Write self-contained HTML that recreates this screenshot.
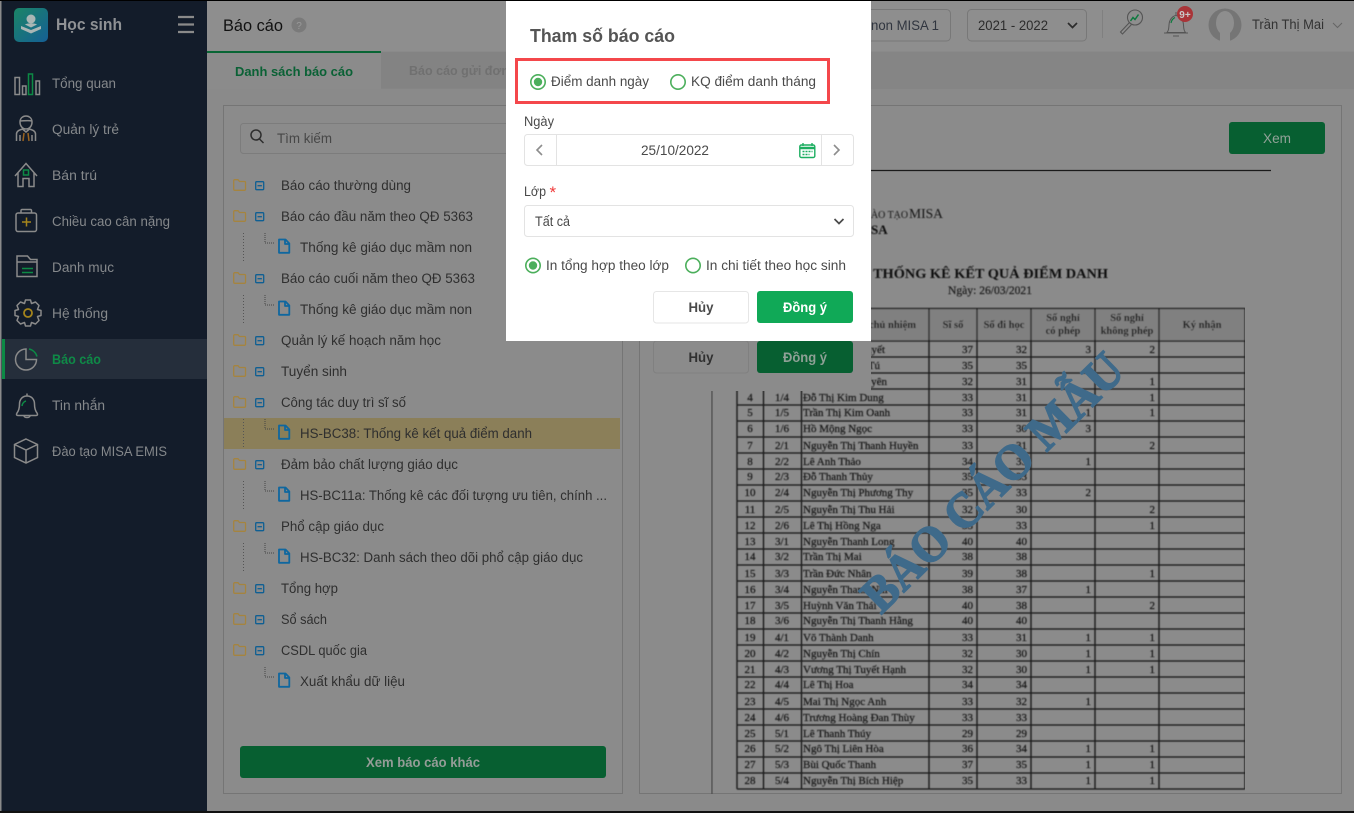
<!DOCTYPE html>
<html lang="vi"><head><meta charset="utf-8"><title>Báo cáo</title>
<style>
html,body{margin:0;padding:0;background:#8b8b8b;width:1354px;height:813px;overflow:hidden}
svg{display:block;position:absolute;left:0;top:0}
text{font-family:"Liberation Sans","Noto Sans CJK SC",sans-serif;font-size:13.5px}
.m text{fill:#85888b;font-size:13.5px}
.t text{fill:#2f2f2f;font-size:13.5px}
.d text{fill:#4a4a4a;font-size:13.5px}
.r text{font-family:"Liberation Serif","Noto Serif CJK SC",serif;font-size:11px;fill:#1a1a1a;stroke:#1a1a1a;stroke-width:.25}
.r .h{font-weight:bold;font-size:10.5px;stroke:none}
.r .n{text-anchor:middle}.r .e{text-anchor:end}
.ic{fill:none;stroke:#8a8a8a;stroke-width:1.5}
.fo{fill:none;stroke:#a5843f;stroke-width:1.3;stroke-linejoin:round}
.mi{fill:none;stroke:#0f5f93;stroke-width:1.3}
.dt{fill:none;stroke:#444;stroke-width:1;stroke-dasharray:1 1}
.dv{fill:none;stroke:#555;stroke-width:1;stroke-dasharray:1 2}
.doc{fill:none;stroke:#0f679f;stroke-width:1.8;stroke-linejoin:round}
</style></head><body>
<svg width="1354" height="813" viewBox="0 0 1354 813" xmlns="http://www.w3.org/2000/svg">
<defs>
<linearGradient id="lg" x1="0" y1="0" x2="1" y2="1"><stop offset="0" stop-color="#1b8566"/><stop offset="1" stop-color="#155f95"/></linearGradient>
<filter id="bl" x="0" y="0" width="100%" height="100%"><feGaussianBlur stdDeviation="0.4"/></filter>
<g id="f"><path class="fo" d="M1.7 1.2h3.3l1.5 1.800h5c.6 0 1 .4 1 1v6.800c0 .6-.4 1-1 1H1.700c-.6 0-1-.4-1-1V2.200c0-.6.4-1 1-1z"/></g>
<g id="x"><rect class="mi" x="0.7" y="0.7" width="8" height="8" rx="1"/><path class="mi" d="M2.5 4.7h4.4"/></g>
<g id="c"><path class="dt" d="M265 -14v10h9"/><path class="doc" d="M279 -7.500h6.500l3.800 4v9.300H279zM285 -7.500v4.500h4.300"/></g>
</defs>

<!-- page base -->
<rect width="1354" height="813" fill="#8a8a8a"/>
<rect x="207" y="1" width="1147" height="50" fill="#8e8e8e"/>
<rect x="207" y="52" width="1147" height="37" fill="#858585"/>
<rect x="207" y="52" width="174" height="37" fill="#8b8b8b"/>
<rect x="207" y="51" width="174" height="2" fill="#086534"/>
<rect x="381" y="52" width="125" height="36" fill="#838383"/>
<text x="235" y="76" textLength="118" lengthAdjust="spacingAndGlyphs" style="font-weight:bold;fill:#0a6135;font-size:13px">Danh sách báo cáo</text>
<text x="409" y="75" textLength="100" lengthAdjust="spacingAndGlyphs" style="font-weight:bold;fill:#707070;font-size:13px">Báo cáo gửi đơn</text>
<text x="223" y="31" textLength="60" lengthAdjust="spacingAndGlyphs" style="font-size:17px;fill:#111">Báo cáo</text>
<circle cx="299" cy="25" r="7.500" fill="#7a7a7a"/><text x="299" y="29" text-anchor="middle" style="font-size:10px;fill:#9a9a9a">?</text>

<!-- header right -->
<rect x="800" y="9.500" width="150.500" height="31.500" rx="4" fill="none" stroke="#787878"/>
<text x="871" y="30" textLength="68" lengthAdjust="spacingAndGlyphs" style="fill:#30353f">non MISA 1</text>
<rect x="967.500" y="9.500" width="119" height="31.500" rx="4" fill="none" stroke="#787878"/>
<text x="978" y="30" textLength="70" lengthAdjust="spacingAndGlyphs" style="fill:#2c2c2c">2021 - 2022</text>
<path d="M1068 23l4.500 4.500 4.500-4.500" fill="none" stroke="#2c2c2c" stroke-width="1.700"/>
<path d="M1102.500 10v28" stroke="#808080"/>
<circle cx="1135" cy="17.500" r="7.500" fill="none" stroke="#555" stroke-width="1.100"/>
<path d="M1129.500 22.500l-9 9.500 2 2 9-9.500" fill="none" stroke="#555" stroke-width="1.100"/>
<path d="M1130.500 21l2.500-3.500 2 2 3.500-5" fill="none" stroke="#0d7a3e" stroke-width="1.500"/>
<path d="M1167 32.500c3-3 1-8 3-12 1.500-3.500 4.500-5 6-5s5 2 6.500 5c2 4 0 9 3 12zM1164 33h24M1173 36h6M1176 12v3" fill="none" stroke="#555" stroke-width="1"/>
<path d="M1171 23c.500-2.500 2-4.500 4-5.500" fill="none" stroke="#0d7a3e" stroke-width="1.200"/>
<circle cx="1185" cy="14" r="8" fill="#a93438"/><text x="1185" y="18" text-anchor="middle" style="font-size:10px;font-weight:bold;fill:#c9c9c9">9+</text>
<circle cx="1225" cy="25" r="16.500" fill="#757575"/><ellipse cx="1225" cy="23" rx="9" ry="12" fill="#8e8e8e"/><rect x="1220" y="30" width="10" height="12" fill="#8e8e8e"/>
<text x="1252" y="29" textLength="72" lengthAdjust="spacingAndGlyphs" style="fill:#333">Trần Thị Mai</text>
<path d="M1333 23l4.500 4.500 4.500-4.500" fill="none" stroke="#666" stroke-width="1"/>

<!-- left panel -->
<rect x="223.500" y="105.500" width="399" height="688" fill="#8b8b8b" stroke="#757575"/>
<rect x="240.500" y="123.500" width="300" height="30" rx="3" fill="#8b8b8b" stroke="#7c7c7c"/>
<circle cx="256" cy="135" r="5" fill="none" stroke="#2e2e2e" stroke-width="1.500"/><path d="M259.500 139l4 4" stroke="#2e2e2e" stroke-width="1.500"/>
<text x="277" y="143" textLength="55" lengthAdjust="spacingAndGlyphs" style="fill:#474747">Tìm kiếm</text>
<rect x="224" y="418" width="396" height="31" fill="#8b7f59"/>

<use href="#f" x="233" y="178.500"/><use href="#x" x="255" y="181"/>
<use href="#f" x="233" y="209.500"/><use href="#x" x="255" y="212"/>
<use href="#f" x="233" y="271.500"/><use href="#x" x="255" y="274"/>
<use href="#f" x="233" y="333.500"/><use href="#x" x="255" y="336"/>
<use href="#f" x="233" y="364.500"/><use href="#x" x="255" y="367"/>
<use href="#f" x="233" y="395.500"/><use href="#x" x="255" y="398"/>
<use href="#f" x="233" y="457.500"/><use href="#x" x="255" y="460"/>
<use href="#f" x="233" y="519.500"/><use href="#x" x="255" y="522"/>
<use href="#f" x="233" y="581.500"/><use href="#x" x="255" y="584"/>
<use href="#f" x="233" y="612.500"/><use href="#x" x="255" y="615"/>
<use href="#f" x="233" y="643.500"/><use href="#x" x="255" y="646"/>
<path class="dv" d="M243.500 233v28M243.500 295v28M243.500 419v28M243.500 481v28M243.500 543v28"/>
<use href="#c" y="247"/><use href="#c" y="309"/><use href="#c" y="433"/><use href="#c" y="495"/><use href="#c" y="557"/><use href="#c" y="681"/>

<g class="t">
<text x="281" y="190" textLength="130" lengthAdjust="spacingAndGlyphs">Báo cáo thường dùng</text>
<text x="281" y="221" textLength="192" lengthAdjust="spacingAndGlyphs">Báo cáo đầu năm theo QĐ 5363</text>
<text x="300" y="252" textLength="172" lengthAdjust="spacingAndGlyphs">Thống kê giáo dục mầm non</text>
<text x="281" y="283" textLength="194" lengthAdjust="spacingAndGlyphs">Báo cáo cuối năm theo QĐ 5363</text>
<text x="300" y="314" textLength="172" lengthAdjust="spacingAndGlyphs">Thống kê giáo dục mầm non</text>
<text x="281" y="345" textLength="160" lengthAdjust="spacingAndGlyphs">Quản lý kế hoạch năm học</text>
<text x="281" y="376" textLength="66" lengthAdjust="spacingAndGlyphs">Tuyển sinh</text>
<text x="281" y="407" textLength="125" lengthAdjust="spacingAndGlyphs">Công tác duy trì sĩ số</text>
<text x="300" y="438" textLength="232" lengthAdjust="spacingAndGlyphs">HS-BC38: Thống kê kết quả điểm danh</text>
<text x="281" y="469" textLength="177" lengthAdjust="spacingAndGlyphs">Đảm bảo chất lượng giáo dục</text>
<text x="300" y="500" textLength="307" lengthAdjust="spacingAndGlyphs">HS-BC11a: Thống kê các đối tượng ưu tiên, chính ...</text>
<text x="281" y="531" textLength="103" lengthAdjust="spacingAndGlyphs">Phổ cập giáo dục</text>
<text x="300" y="562" textLength="283" lengthAdjust="spacingAndGlyphs">HS-BC32: Danh sách theo dõi phổ cập giáo dục</text>
<text x="281" y="593" textLength="57" lengthAdjust="spacingAndGlyphs">Tổng hợp</text>
<text x="281" y="624" textLength="46" lengthAdjust="spacingAndGlyphs">Sổ sách</text>
<text x="281" y="655" textLength="86" lengthAdjust="spacingAndGlyphs">CSDL quốc gia</text>
<text x="300" y="686" textLength="105" lengthAdjust="spacingAndGlyphs">Xuất khẩu dữ liệu</text>
</g>
<rect x="240" y="746" width="366" height="32" rx="3" fill="#075f31"/>
<text x="423" y="767" text-anchor="middle" textLength="114" lengthAdjust="spacingAndGlyphs" style="font-weight:bold;fill:#949c97;font-size:13.500px">Xem báo cáo khác</text>

<!-- right panel -->
<rect x="639.500" y="105.500" width="702" height="688" fill="#8b8b8b" stroke="#757575"/>
<rect x="1229" y="122" width="96" height="32" rx="3" fill="#075f31"/>
<text x="1277" y="143" text-anchor="middle" textLength="28" lengthAdjust="spacingAndGlyphs" style="fill:#92a298">Xem</text>
<path d="M860 170.500h411" stroke="#1b1b1b" stroke-width="1.200"/>

<g filter="url(#bl)">
<text x="871" y="218" textLength="37" lengthAdjust="spacingAndGlyphs" style='font-family:"Liberation Serif",serif;font-size:10.500px;fill:#161616'>ÀO TẠO</text>
<text x="909" y="218" textLength="34" lengthAdjust="spacingAndGlyphs" style='font-family:"Liberation Serif",serif;font-size:13.500px;fill:#161616'>MISA</text>
<text x="871" y="234" style='font-family:"Liberation Serif",serif;font-size:13px;font-weight:bold;fill:#111'>SA</text>
<text x="873" y="278" textLength="235" lengthAdjust="spacingAndGlyphs" style='font-family:"Liberation Serif",serif;font-size:14px;font-weight:bold;fill:#111'>THỐNG KÊ KẾT QUẢ ĐIỂM DANH</text>
<text x="948" y="294" textLength="84" lengthAdjust="spacingAndGlyphs" style='font-family:"Liberation Serif",serif;font-size:11.500px;fill:#1c1c1c;stroke:#1c1c1c;stroke-width:.2'>Ngày: 26/03/2021</text>
<rect x="737" y="309" width="508" height="32" fill="#808080"/>
<path d="M711.500 300V794" stroke="#141414" stroke-width="1.300"/>
<path d="M737 308.500H1245M737 341H1245M737 357H1245M737 373H1245M737 389H1245M737 405H1245M737 421H1245M737 437H1245M737 453H1245M737 469H1245M737 485H1245M737 501H1245M737 517H1245M737 533H1245M737 549H1245M737 565H1245M737 581H1245M737 597H1245M737 613H1245M737 629H1245M737 645H1245M737 661H1245M737 677H1245M737 693H1245M737 709H1245M737 725H1245M737 741H1245M737 757H1245M737 773H1245M737 789H1245" stroke="#181818" stroke-width="1.300"/>
<path d="M737 308V789M763.500 308V789M801.500 308V789M929 308V789M977 308V789M1031 308V789M1095 308V789M1159 308V789M1245 308V789" stroke="#181818" stroke-width="1.300"/>
<g class="r">
<text x="916" y="328" class="h e">Giáo viên chủ nhiệm</text><text x="953" y="328" class="h n">Sĩ số</text><text x="1004" y="328" class="h n">Số đi học</text>
<text x="1063" y="321" class="h n">Số nghỉ</text><text x="1063" y="334" class="h n">có phép</text><text x="1127" y="321" class="h n">Số nghỉ</text><text x="1127" y="334" class="h n">không phép</text><text x="1202" y="328" class="h n">Ký nhận</text>
<text x="885" y="353" class="e">Nguyễn Thị Tuyết</text><text x="973" y="353" class="e">37</text><text x="1027" y="353" class="e">32</text><text x="1091" y="353" class="e">3</text><text x="1155" y="353" class="e">2</text>
<text x="880" y="369" class="e">Nguyễn Thị Tú</text><text x="973" y="369" class="e">35</text><text x="1027" y="369" class="e">35</text>
<text x="887" y="385" class="e">Nguyễn Thị Uyên</text><text x="973" y="385" class="e">32</text><text x="1027" y="385" class="e">31</text><text x="1155" y="385" class="e">1</text>
<text x="750" y="401" class="n">4</text><text x="782" y="401" class="n">1/4</text><text x="803" y="401">Đỗ Thị Kim Dung</text><text x="973" y="401" class="e">33</text><text x="1027" y="401" class="e">31</text><text x="1155" y="401" class="e">1</text>
<text x="750" y="416" class="n">5</text><text x="782" y="416" class="n">1/5</text><text x="803" y="416">Trần Thị Kim Oanh</text><text x="973" y="416" class="e">33</text><text x="1027" y="416" class="e">31</text><text x="1091" y="416" class="e">1</text><text x="1155" y="416" class="e">1</text>
<text x="750" y="432" class="n">6</text><text x="782" y="432" class="n">1/6</text><text x="803" y="432">Hồ Mộng Ngọc</text><text x="973" y="432" class="e">33</text><text x="1027" y="432" class="e">30</text><text x="1091" y="432" class="e">3</text>
<text x="750" y="449" class="n">7</text><text x="782" y="449" class="n">2/1</text><text x="803" y="449">Nguyễn Thị Thanh Huyền</text><text x="973" y="449" class="e">33</text><text x="1027" y="449" class="e">31</text><text x="1155" y="449" class="e">2</text>
<text x="750" y="465" class="n">8</text><text x="782" y="465" class="n">2/2</text><text x="803" y="465">Lê Anh Thảo</text><text x="973" y="465" class="e">34</text><text x="1027" y="465" class="e">33</text><text x="1091" y="465" class="e">1</text>
<text x="750" y="480" class="n">9</text><text x="782" y="480" class="n">2/3</text><text x="803" y="480">Đỗ Thanh Thủy</text><text x="973" y="480" class="e">35</text><text x="1027" y="480" class="e">33</text>
<text x="750" y="496" class="n">10</text><text x="782" y="496" class="n">2/4</text><text x="803" y="496">Nguyễn Thị Phương Thy</text><text x="973" y="496" class="e">35</text><text x="1027" y="496" class="e">33</text><text x="1091" y="496" class="e">2</text>
<text x="750" y="513" class="n">11</text><text x="782" y="513" class="n">2/5</text><text x="803" y="513">Nguyễn Thị Thu Hải</text><text x="973" y="513" class="e">32</text><text x="1027" y="513" class="e">30</text><text x="1155" y="513" class="e">2</text>
<text x="750" y="529" class="n">12</text><text x="782" y="529" class="n">2/6</text><text x="803" y="529">Lê Thị Hồng Nga</text><text x="973" y="529" class="e">33</text><text x="1027" y="529" class="e">33</text><text x="1155" y="529" class="e">1</text>
<text x="750" y="545" class="n">13</text><text x="782" y="545" class="n">3/1</text><text x="803" y="545">Nguyễn Thanh Long</text><text x="973" y="545" class="e">40</text><text x="1027" y="545" class="e">40</text>
<text x="750" y="560" class="n">14</text><text x="782" y="560" class="n">3/2</text><text x="803" y="560">Trần Thị Mai</text><text x="973" y="560" class="e">38</text><text x="1027" y="560" class="e">38</text>
<text x="750" y="577" class="n">15</text><text x="782" y="577" class="n">3/3</text><text x="803" y="577">Trần Đức Nhân</text><text x="973" y="577" class="e">39</text><text x="1027" y="577" class="e">38</text><text x="1155" y="577" class="e">1</text>
<text x="750" y="593" class="n">16</text><text x="782" y="593" class="n">3/4</text><text x="803" y="593">Nguyễn Thanh Nhi</text><text x="973" y="593" class="e">38</text><text x="1027" y="593" class="e">37</text><text x="1091" y="593" class="e">1</text>
<text x="750" y="609" class="n">17</text><text x="782" y="609" class="n">3/5</text><text x="803" y="609">Huỳnh Văn Thái</text><text x="973" y="609" class="e">40</text><text x="1027" y="609" class="e">38</text><text x="1155" y="609" class="e">2</text>
<text x="750" y="624" class="n">18</text><text x="782" y="624" class="n">3/6</text><text x="803" y="624">Nguyễn Thị Thanh Hằng</text><text x="973" y="624" class="e">40</text><text x="1027" y="624" class="e">40</text>
<text x="750" y="641" class="n">19</text><text x="782" y="641" class="n">4/1</text><text x="803" y="641">Võ Thành Danh</text><text x="973" y="641" class="e">33</text><text x="1027" y="641" class="e">31</text><text x="1091" y="641" class="e">1</text><text x="1155" y="641" class="e">1</text>
<text x="750" y="657" class="n">20</text><text x="782" y="657" class="n">4/2</text><text x="803" y="657">Nguyễn Thị Chín</text><text x="973" y="657" class="e">32</text><text x="1027" y="657" class="e">30</text><text x="1091" y="657" class="e">1</text><text x="1155" y="657" class="e">1</text>
<text x="750" y="673" class="n">21</text><text x="782" y="673" class="n">4/3</text><text x="803" y="673">Vương Thị Tuyết Hạnh</text><text x="973" y="673" class="e">32</text><text x="1027" y="673" class="e">30</text><text x="1091" y="673" class="e">1</text><text x="1155" y="673" class="e">1</text>
<text x="750" y="688" class="n">22</text><text x="782" y="688" class="n">4/4</text><text x="803" y="688">Lê Thị Hoa</text><text x="973" y="688" class="e">34</text><text x="1027" y="688" class="e">34</text>
<text x="750" y="705" class="n">23</text><text x="782" y="705" class="n">4/5</text><text x="803" y="705">Mai Thị Ngọc Anh</text><text x="973" y="705" class="e">33</text><text x="1027" y="705" class="e">32</text><text x="1091" y="705" class="e">1</text>
<text x="750" y="721" class="n">24</text><text x="782" y="721" class="n">4/6</text><text x="803" y="721">Trương Hoàng Đan Thùy</text><text x="973" y="721" class="e">33</text><text x="1027" y="721" class="e">33</text>
<text x="750" y="737" class="n">25</text><text x="782" y="737" class="n">5/1</text><text x="803" y="737">Lê Thanh Thúy</text><text x="973" y="737" class="e">29</text><text x="1027" y="737" class="e">29</text>
<text x="750" y="752" class="n">26</text><text x="782" y="752" class="n">5/2</text><text x="803" y="752">Ngô Thị Liên Hòa</text><text x="973" y="752" class="e">36</text><text x="1027" y="752" class="e">34</text><text x="1091" y="752" class="e">1</text><text x="1155" y="752" class="e">1</text>
<text x="750" y="768" class="n">27</text><text x="782" y="768" class="n">5/3</text><text x="803" y="768">Bùi Quốc Thanh</text><text x="973" y="768" class="e">37</text><text x="1027" y="768" class="e">35</text><text x="1091" y="768" class="e">1</text><text x="1155" y="768" class="e">1</text>
<text x="750" y="784" class="n">28</text><text x="782" y="784" class="n">5/4</text><text x="803" y="784">Nguyễn Thị Bích Hiệp</text><text x="973" y="784" class="e">35</text><text x="1027" y="784" class="e">33</text><text x="1091" y="784" class="e">1</text><text x="1155" y="784" class="e">1</text>
</g>
</g>
<text transform="translate(881 615) rotate(-44.500)" textLength="345" lengthAdjust="spacingAndGlyphs" style='font-family:"Liberation Serif",serif;font-size:50px;font-weight:bold;fill:#3f6a8a;stroke:#3f6a8a;stroke-width:1.500'>BÁO CÁO MẪU</text>

<!-- dimmed dialog behind -->
<rect x="640" y="106" width="231" height="285" fill="#8b8b8b"/>
<rect x="653.500" y="341" width="95" height="32" rx="3" fill="#8b8b8b" stroke="#808080"/>
<text x="701" y="362" text-anchor="middle" textLength="25" lengthAdjust="spacingAndGlyphs" style="font-weight:bold;fill:#303030;font-size:13.500px">Hủy</text>
<rect x="757" y="341" width="96" height="32" rx="3" fill="#075f31"/>
<text x="805" y="362" text-anchor="middle" textLength="44" lengthAdjust="spacingAndGlyphs" style="font-weight:bold;fill:#8fa096;font-size:13.500px">Đồng ý</text>

<!-- sidebar -->
<rect x="1.500" y="1" width="205.500" height="812" fill="#131c2a"/>
<rect x="2" y="339" width="205" height="40" fill="#252e3b"/>
<rect x="2" y="339" width="3" height="40" fill="#0c8a45"/>
<rect x="14" y="8" width="34" height="34" rx="5" fill="url(#lg)"/>
<circle cx="31" cy="19" r="4.500" fill="#a9b6b5"/><path d="M21 26l10 4 10-4v3l-10 4.500-10-4.500zM25 24.500c2-1.500 10-1.500 12 0l-6 3z" fill="#a9b6b5"/>
<text x="56" y="30" textLength="66" lengthAdjust="spacingAndGlyphs" style="font-size:17px;font-weight:bold;fill:#8f9194">Học sinh</text>
<path d="M178 17h16M178 24.500h16M178 32h16" stroke="#8a8a8a" stroke-width="2.200"/>
<!-- sidebar icons -->
<rect class="ic" x="15" y="77.500" width="4.500" height="17"/><rect class="ic" x="22.500" y="86" width="3.500" height="8.500"/><rect x="28.500" y="74" width="4" height="20.500" fill="none" stroke="#0c8a45" stroke-width="1.500"/><rect class="ic" x="36" y="81" width="3.500" height="13.500"/>
<path class="ic" d="M16.500 141v-7c0-3 3-4 6-5l3.500 3 3.500-3c3 1 6 2 6 5v7M20 141v-6M32 141v-6M20 122c0-8 12-8 12 0 0 4-2.500 7-6 7s-6-3-6-7zM20 121c4 0 8-1 12 0"/>
<path d="M24 133l-1 8M28 133l1 8" fill="none" stroke="#9a6320" stroke-width="1.500"/>
<path class="ic" d="M15 176l11-12.500 11 12.500M18 173v13.500h5v-8h6v8h5V173"/><rect x="23.500" y="170" width="5" height="5" fill="none" stroke="#0c8a45" stroke-width="1.500"/>
<rect class="ic" x="16" y="213" width="20.500" height="18.500" rx="2"/><path class="ic" d="M21 213v-2.500c0-.5.500-1 1-1h8.500c.5 0 1 .500 1 1v2.500"/><path d="M26.500 217.500v9M22 222h9" fill="none" stroke="#a5851c" stroke-width="1.500"/>
<path class="ic" d="M17 276.500v-20.500h10.500l3 3.500h6.500v17zM17 262h20"/><path d="M22 268.500h11M22 272.500h11" stroke="#0c8a45" stroke-width="1.500"/>
<path class="ic" stroke-linejoin="round" transform="translate(28 313)" d="M-2.500 -13H2.500L3.500 -9.500L7.500 -11L11 -7.500L9.500 -3.500L13 -2.500V2.500L9.500 3.500L11 7.500L7.500 11L3.500 9.500L2.500 13H-2.500L-3.500 9.500L-7.500 11L-11 7.500L-9.500 3.500L-13 2.500V-2.500L-9.500 -3.500L-11 -7.500L-7.500 -11L-3.500 -9.500Z"/>
<circle cx="28" cy="313" r="4" fill="none" stroke="#a5851c" stroke-width="1.800"/>
<path class="ic" d="M26 349a10.500 10.500 0 1 0 10.500 10.500H26z"/><path d="M29 349a10.500 10.500 0 0 1 8 7.500" fill="none" stroke="#0c8a45" stroke-width="1.500"/>
<path class="ic" d="M27 396c-5.500 0-7.500 4.500-7.500 8 0 4-1 7-2.500 9-1 1.500-.5 2.500 1 2.500h18c1.500 0 2-1 1-2.500-1.500-2-2.500-5-2.500-9 0-3.500-2-8-7.500-8zM27 396v-2.500M24 416c.5 2 5.500 2 6 0"/>
<path d="M22 406c.3-2.500 2-4.500 4-5" fill="none" stroke="#0c8a45" stroke-width="1.500"/>
<path class="ic" d="M26 439l11.500 5.500v13L26 463l-11.500-5.500v-13zM14.500 444.500L26 450l11.500-5.500M26 450v13"/>
<g class="m">
<text x="52" y="88" textLength="64" lengthAdjust="spacingAndGlyphs">Tổng quan</text>
<text x="52" y="134" textLength="67" lengthAdjust="spacingAndGlyphs">Quản lý trẻ</text>
<text x="52" y="180" textLength="45" lengthAdjust="spacingAndGlyphs">Bán trú</text>
<text x="52" y="226" textLength="118" lengthAdjust="spacingAndGlyphs">Chiều cao cân nặng</text>
<text x="52" y="272" textLength="62" lengthAdjust="spacingAndGlyphs">Danh mục</text>
<text x="52" y="318" textLength="56" lengthAdjust="spacingAndGlyphs">Hệ thống</text>
<text x="52" y="364" textLength="49" lengthAdjust="spacingAndGlyphs" style="font-weight:bold;fill:#0f8a47">Báo cáo</text>
<text x="52" y="410" textLength="53" lengthAdjust="spacingAndGlyphs">Tin nhắn</text>
<text x="52" y="456" textLength="115" lengthAdjust="spacingAndGlyphs">Đào tạo MISA EMIS</text>
</g>

<!-- frame -->
<rect x="0" y="0" width="1354" height="1" fill="#000"/>
<rect x="0" y="811" width="1354" height="2" fill="#111"/>

<!-- dialog -->
<rect x="506" y="1" width="365" height="340" fill="#fff"/>
<text x="530" y="42" textLength="145" lengthAdjust="spacingAndGlyphs" style="font-size:18.500px;font-weight:bold;fill:#555">Tham số báo cáo</text>
<rect x="516.500" y="59.500" width="312" height="43" fill="none" stroke="#f4474b" stroke-width="3"/>
<circle cx="538" cy="82" r="7.200" fill="none" stroke="#4caf5c" stroke-width="1.600"/><circle cx="538" cy="82" r="4.200" fill="#4caf5c"/>
<circle cx="678" cy="82" r="7.200" fill="none" stroke="#4caf5c" stroke-width="1.600"/>
<rect x="524.500" y="134.500" width="329" height="31" rx="3" fill="#fff" stroke="#e3e3e3"/>
<path d="M556.500 135v30M821.500 135v30" stroke="#e3e3e3"/>
<path d="M542 145l-5 5 5 5M834 145l5 5-5 5" fill="none" stroke="#8d8d8d" stroke-width="1.600"/>
<rect x="799.800" y="145" width="15" height="12.500" rx="1.500" fill="none" stroke="#1cae60" stroke-width="1.400"/>
<path d="M800 148h15" stroke="#1cae60" stroke-width="2.500"/><path d="M803 143v3M812 143v3" stroke="#1cae60" stroke-width="1.400"/>
<path d="M802.500 151.500h10M802.500 154.500h7" stroke="#1cae60" stroke-width="1.500" stroke-dasharray="2 1"/>
<rect x="524.500" y="205.500" width="329" height="31" rx="3" fill="#fff" stroke="#e3e3e3"/>
<path d="M834.500 219l4.500 4.500 4.500-4.500" fill="none" stroke="#4a4a4a" stroke-width="1.700"/>
<g class="d">
<text x="551" y="86" textLength="98" lengthAdjust="spacingAndGlyphs">Điểm danh ngày</text>
<text x="691" y="86" textLength="125" lengthAdjust="spacingAndGlyphs">KQ điểm danh tháng</text>
<text x="524" y="126" textLength="30" lengthAdjust="spacingAndGlyphs">Ngày</text>
<text x="641" y="155" textLength="68" lengthAdjust="spacingAndGlyphs">25/10/2022</text>
<text x="524" y="196" textLength="22" lengthAdjust="spacingAndGlyphs">Lớp</text>
<text x="535" y="226" textLength="35" lengthAdjust="spacingAndGlyphs">Tất cả</text>
<text x="546" y="270" textLength="123" lengthAdjust="spacingAndGlyphs">In tổng hợp theo lớp</text>
<text x="706" y="270" textLength="140" lengthAdjust="spacingAndGlyphs">In chi tiết theo học sinh</text>
</g>
<text x="549.500" y="198" style="font-size:17px;fill:#f03a3a">*</text>
<circle cx="533" cy="265.500" r="7.200" fill="none" stroke="#4caf5c" stroke-width="1.600"/><circle cx="533" cy="265.500" r="4.200" fill="#4caf5c"/>
<circle cx="693" cy="265.500" r="7.200" fill="none" stroke="#4caf5c" stroke-width="1.600"/>
<rect x="653.500" y="291.500" width="95" height="31.500" rx="3" fill="#fff" stroke="#e6e6e6"/>
<text x="701" y="312" text-anchor="middle" textLength="25" lengthAdjust="spacingAndGlyphs" style="font-weight:bold;fill:#4a4a4a;font-size:13.500px">Hủy</text>
<rect x="757" y="291" width="96" height="32" rx="3" fill="#10a957"/>
<text x="805" y="312" text-anchor="middle" textLength="44" lengthAdjust="spacingAndGlyphs" style="font-weight:bold;fill:#fff;font-size:13.500px">Đồng ý</text>
</svg>
</body></html>
